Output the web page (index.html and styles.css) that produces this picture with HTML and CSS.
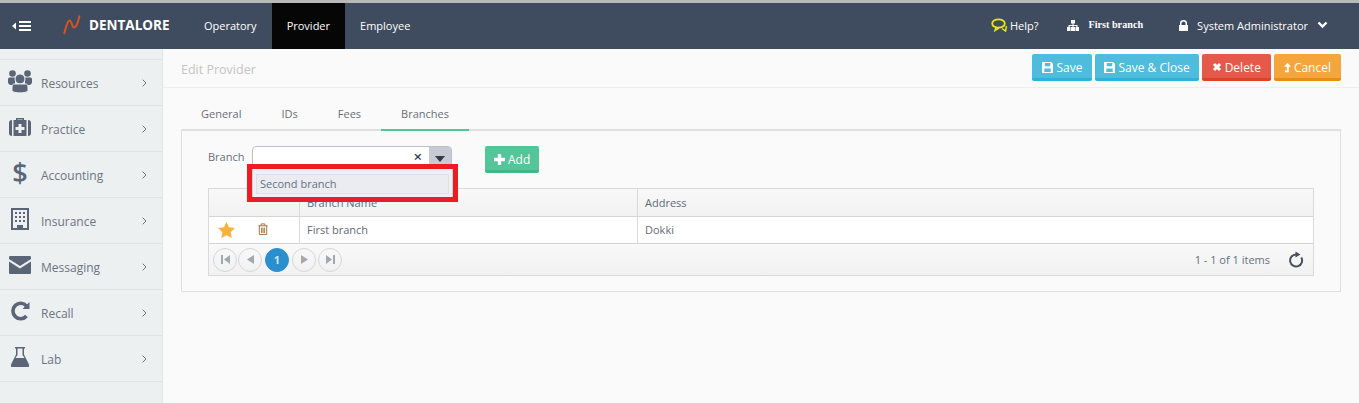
FILE: index.html
```html
<!DOCTYPE html>
<html lang="en">
<head>
<meta charset="utf-8">
<title>Edit Provider</title>
<link rel="stylesheet" href="styles.css">
</head>
<body>
<div class="app">
  <header class="topbar">
    <div class="toggle">
      <svg width="20" height="12" viewBox="0 0 20 12"><path class="w" d="M0 6l4-3.500v7zM7 1h12v2H7zM7 5h12v2H7zM7 9h12v2H7z"/></svg>
    </div>
    <div class="logo">
      <svg width="19" height="20" viewBox="0 0 19 20"><path d="M1 19C3 13 4 6 6.500 5.500c2-.4 2.500 7 4.500 7 3 0 4.500-7 5.500-12" fill="none" stroke="#d9541e" stroke-width="2"/></svg>
      <span>DENTALORE</span>
    </div>
    <nav class="mainnav">
      <a class="navitem">Operatory</a>
      <a class="navitem active">Provider</a>
      <a class="navitem">Employee</a>
    </nav>
    <div class="topright">
      <span class="help">
        <svg width="17" height="14" viewBox="0 0 17 14"><ellipse cx="7.500" cy="5.500" rx="6.300" ry="4.200" fill="none" stroke="#e6e61a" stroke-width="1.800"/><path d="M5 9.500l-1 3 4-2.500M11 10.500l3.500 2.500 1-5" fill="none" stroke="#e6e61a" stroke-width="1.500"/></svg>Help?
      </span>
      <span class="branch">
        <svg width="12" height="11" viewBox="0 0 12 11"><path class="w" d="M4 0h4v3.500H6.500V5h4v2h1.500v4H8.500V7h.8V6H6.500v1H8v4H4V7h1.500V6H2.700v1h.8v4H0V7h1.500V5h4V3.500H4z"/></svg>
        <b>First branch</b>
      </span>
      <span class="user">
        <svg width="9" height="11" viewBox="0 0 9 11"><path class="w" d="M0 5h1V3.200a3.500 3.200 0 0 1 7 0V5h1v6H0zM2.500 5h4V3.200a2 1.800 0 0 0-4 0z"/></svg>
        <span class="username">System Administrator</span>
        <svg width="11" height="8" viewBox="0 0 11 8"><path d="M1.500 1.500l4 4 4-4" fill="none" stroke="#fff" stroke-width="2.400"/></svg>
      </span>
    </div>
  </header>
  <div class="main">
    <aside class="sidebar">
      <div class="sideitem">
        <span class="iconbox"><svg width="24" height="23" viewBox="0 0 24 23"><g class="g"><circle cx="4.500" cy="3.500" r="3.300"/><circle cx="19.500" cy="3.500" r="3.300"/><path d="M0 9c0-1 1-1.500 2-1.500h5V15H2l-2-2zM24 9c0-1-1-1.500-2-1.500h-5V15h5l2-2z"/><circle cx="12" cy="9" r="5" stroke="#ecf0f1" stroke-width="1"/><path d="M6 14h12c2 0 2 3 2 6v1c-2 2.500-14 2.500-16 0v-1c0-3 0-6 2-6z" stroke="#ecf0f1" stroke-width="1"/></g></svg></span>
        <span class="sidelabel">Resources</span>
        <svg class="chev" width="5" height="8" viewBox="0 0 5 8"><path d="M.7.7L4 4 .7 7.300" fill="none" stroke="#6c7482" stroke-width="1"/></svg>
      </div>
      <div class="sideitem">
        <span class="iconbox"><svg width="22" height="20" viewBox="0 0 22 20"><path class="g" fill-rule="evenodd" d="M7 3V1h8v2h-1.500V2.500h-5V3zM0 6c0-2 1-3 3-3v16c-2 0-3-1-3-3zM22 6c0-2-1-3-3-3v16c2 0 3-1 3-3zM4.500 3h13v16h-13zM9.500 7v3h-3v3h3v3h3v-3h3v-3h-3V7z"/></svg></span>
        <span class="sidelabel">Practice</span>
        <svg class="chev" width="5" height="8" viewBox="0 0 5 8"><path d="M.7.7L4 4 .7 7.300" fill="none" stroke="#6c7482" stroke-width="1"/></svg>
      </div>
      <div class="sideitem">
        <span class="iconbox"><span class="dollar">$</span></span>
        <span class="sidelabel">Accounting</span>
        <svg class="chev" width="5" height="8" viewBox="0 0 5 8"><path d="M.7.7L4 4 .7 7.300" fill="none" stroke="#6c7482" stroke-width="1"/></svg>
      </div>
      <div class="sideitem">
        <span class="iconbox"><svg width="18" height="22" viewBox="0 0 18 22"><path class="g" fill-rule="evenodd" d="M0 0h18v22H0zM2 2v18h4v-3h6v3h4V2z"/><path class="g" d="M4 4h2v2H4zM8 4h2v2H8zM12 4h2v2h-2zM4 8h2v2H4zM8 8h2v2H8zM12 8h2v2h-2zM4 12h2v2H4zM8 12h2v2H8zM12 12h2v2h-2z"/></svg></span>
        <span class="sidelabel">Insurance</span>
        <svg class="chev" width="5" height="8" viewBox="0 0 5 8"><path d="M.7.7L4 4 .7 7.300" fill="none" stroke="#6c7482" stroke-width="1"/></svg>
      </div>
      <div class="sideitem">
        <span class="iconbox"><svg width="22" height="18" viewBox="0 0 22 18"><path class="g" d="M1 0h20c1 0 1 1 1 3L11 10 0 3c0-2 0-3 1-3zM0 5.500L11 12.500l11-7V17c0 .5-.5 1-1 1H1c-.5 0-1-.5-1-1z"/></svg></span>
        <span class="sidelabel">Messaging</span>
        <svg class="chev" width="5" height="8" viewBox="0 0 5 8"><path d="M.7.7L4 4 .7 7.300" fill="none" stroke="#6c7482" stroke-width="1"/></svg>
      </div>
      <div class="sideitem">
        <span class="iconbox"><svg width="20" height="20" viewBox="0 0 20 20"><path d="M16.500 15a7.700 7.700 0 1 1 0-10" fill="none" stroke="#5b6577" stroke-width="3.600"/><path class="g" d="M19.500 1v7h-7z"/></svg></span>
        <span class="sidelabel">Recall</span>
        <svg class="chev" width="5" height="8" viewBox="0 0 5 8"><path d="M.7.7L4 4 .7 7.300" fill="none" stroke="#6c7482" stroke-width="1"/></svg>
      </div>
      <div class="sideitem">
        <span class="iconbox"><svg width="18" height="20" viewBox="0 0 18 20"><path class="g" d="M4 0h10v1.500h-1v6l5 10c.5 1.500 0 2.500-1 2.500H1c-1 0-1.500-1-1-2.500l5-10v-6H4zM6.500 1.500v6.500L4.500 11h9l-2-3V1.500z"/></svg></span>
        <span class="sidelabel">Lab</span>
        <svg class="chev" width="5" height="8" viewBox="0 0 5 8"><path d="M.7.7L4 4 .7 7.300" fill="none" stroke="#6c7482" stroke-width="1"/></svg>
      </div>
    </aside>
    <main class="content">
      <div class="pagehead">
        <h1 class="title">Edit Provider</h1>
        <div class="actions">
          <button class="btn info save"><svg width="11" height="11" viewBox="0 0 12 12"><path class="w" fill-rule="evenodd" d="M0 0h10l2 2v10H0zM3 1v3.500h6V1zM2.500 7v4h7V7z"/></svg>Save</button>
          <button class="btn info saveclose"><svg width="11" height="11" viewBox="0 0 12 12"><path class="w" fill-rule="evenodd" d="M0 0h10l2 2v10H0zM3 1v3.500h6V1zM2.500 7v4h7V7z"/></svg>Save &amp; Close</button>
          <button class="btn danger"><svg width="10" height="10" viewBox="0 0 10 10"><path d="M2 2l6 6M8 2l-6 6" stroke="#fff" stroke-width="3"/></svg>Delete</button>
          <button class="btn warn"><svg width="7" height="11" viewBox="0 0 8 11"><path class="w" d="M4 0l4 4.500H5.500V11H1V9h2.200V4.500H0z"/></svg>Cancel</button>
        </div>
      </div>
      <div class="body">
        <div class="tabs">
          <a class="tab">General</a>
          <a class="tab">IDs</a>
          <a class="tab">Fees</a>
          <a class="tab current">Branches</a>
        </div>
        <section class="panel">
          <div class="formrow">
            <label class="fieldlabel">Branch</label>
            <div class="combo">
              <span class="comboinput"><span class="clear">×</span></span>
              <span class="comboarrow"><svg width="10" height="6" viewBox="0 0 10 6"><path d="M0 0h10L5 6z" fill="#2f3a4d"/></svg></span>
              <div class="dropdown"><div class="option">Second branch</div></div>
            </div>
            <button class="btn add"><svg width="11" height="11" viewBox="0 0 10 10"><path class="w" d="M3.500 0h3v3.500H10v3H6.500V10h-3V6.500H0v-3h3.500z"/></svg>Add</button>
          </div>
          <div class="grid">
            <div class="gridrow gridhead">
              <div class="cell c1"></div>
              <div class="cell c2">Branch Name</div>
              <div class="cell c3">Address</div>
            </div>
            <div class="gridrow griddata">
              <div class="cell c1">
                <svg width="17" height="16" viewBox="0 0 18 17"><path d="M9 0l2.700 5.700 6.300.8-4.600 4.300 1.200 6.200L9 14l-5.600 3 1.200-6.200L0 6.500l6.300-.8z" fill="#f7b13c"/></svg>
                <svg class="trash" width="12" height="12" viewBox="0 0 12 13"><path d="M1 3h10M4 3V1h4v2M2 3v9.500h8V3M4.500 5v6M6 5v6M7.500 5v6" fill="none" stroke="#a0693a" stroke-width="1"/></svg>
              </div>
              <div class="cell c2">First branch</div>
              <div class="cell c3">Dokki</div>
            </div>
            <div class="pager">
              <span class="pg"><svg width="9" height="9" viewBox="0 0 9 9"><path class="p" d="M0 0h2v9H0zM9 0v9L3 4.500z"/></svg></span>
              <span class="pg"><svg width="7" height="9" viewBox="0 0 7 9"><path class="p" d="M7 0v9L0 4.500z"/></svg></span>
              <span class="pg on">1</span>
              <span class="pg next"><svg width="7" height="9" viewBox="0 0 7 9"><path class="p" d="M0 0v9l7-4.500z"/></svg></span>
              <span class="pg last"><svg width="9" height="9" viewBox="0 0 9 9"><path class="p" d="M7 0h2v9H7zM0 0v9l6-4.500z"/></svg></span>
              <span class="pginfo">1 - 1 of 1 items</span>
              <svg class="refresh" width="16" height="17" viewBox="0 0 16 17"><path d="M8 3.500A6 6 0 1 0 13.300 6.500" fill="none" stroke="#47505f" stroke-width="2"/><path d="M7.500 .5L12.500 3.500 7.500 6.500z" fill="#47505f"/></svg>
            </div>
          </div>
        </section>
      </div>
    </main>
  </div>
</div>
</body>
</html>
```
FILE: styles.css
```css
* { box-sizing: border-box; }
html, body { margin: 0; height: 100%; overflow: hidden; }
body { font-family: "Open Sans", sans-serif; font-size: 11px; color: #5c6573; background: #fafafa; }
.w { fill: #fff; }
.g { fill: #5b6577; }
.p { fill: #a3a8b0; }
.app { display: flex; flex-direction: column; height: 403px; border-top: 3px solid #b9b9b9; }
.topbar { flex: 0 0 46px; display: flex; align-items: center; background: #3f4b5f; color: #fff; }
.toggle { width: 63px; padding: 0 0 0 12px; display: flex; align-items: center; }
.logo { width: 126px; display: flex; align-items: center; gap: 7px; padding: 0 0 2px; font-weight: 700; font-size: 13.500px; }
.mainnav { display: flex; height: 46px; }
.navitem { display: flex; align-items: center; padding: 0 15px 1px; font-size: 11px; color: #fff; }
.navitem.active { background: #060606; }
.topright { margin-left: auto; display: flex; align-items: center; font-size: 11px; padding: 0 31px 2px 0; }
.help { display: flex; align-items: center; gap: 2px; margin-right: 29px; }
.branch { display: flex; align-items: center; gap: 9px; margin-right: 36px; }
.branch b { font-family: "Liberation Serif", serif; font-size: 10.200px; font-weight: 700; margin-top: -2px; }
.user { display: flex; align-items: center; }
.username { margin: 0 9px; }
.main { flex: 1; display: flex; min-height: 0; }
.sidebar { flex: 0 0 163px; background: #ecf0f1; border-right: 1px solid #e2e5e7; padding-top: 10px; }
.sideitem { height: 46px; border-top: 1px solid #e0e3e5; display: flex; align-items: center; position: relative; padding: 0 0 3px 4px; }
.sideitem:last-child { border-bottom: 1px solid #e0e3e5; height: 47px; }
.iconbox { flex: 0 0 32px; display: flex; align-items: center; justify-content: center; }
.sidelabel { position: absolute; left: 41px; top: 15px; font-size: 12px; color: #6c7482; }
.chev { position: absolute; left: 142px; top: 19px; }
.dollar { font-size: 27px; font-weight: 600; line-height: 24px; color: #5b6577; }
.content { flex: 1; min-width: 0; }
.pagehead { height: 39px; border-bottom: 1px solid #eeeeee; display: flex; align-items: flex-start; justify-content: space-between; padding: 5px 18px 0 18px; }
.title { margin: 7px 0 0; font-size: 12.500px; font-weight: 400; color: #c4c4c4; }
.actions { display: flex; gap: 3px; }
.btn { font-family: "Open Sans", sans-serif; font-size: 12px; color: #fff; border: 0; border-radius: 2px; height: 27px; padding: 2px 10px 0; display: inline-flex; align-items: center; gap: 3px; }
.saveclose { padding: 2px 9px 0; }
.info { background: #4fbcdc; border-bottom: 3px solid #2fb0d6; }
.danger { background: #e5594b; border-bottom: 3px solid #e03f2c; }
.warn { background: #f4a63d; border-bottom: 3px solid #e58f12; }
.add { background: #53c598; border-bottom: 3px solid #3fb787; margin-left: 33px; padding: 2px 9px 0; }
.body { padding: 14px 18px 0; }
.tabs { display: flex; height: 29px; }
.tab { font-size: 11px; color: #6a6f78; padding: 4px 20px 0; height: 29px; }
.tab.current { border-bottom: 2px solid #53c598; position: relative; z-index: 1; }
.panel { border: 1px solid #dfdfdf; border-top-width: 2px; height: 163px; margin-top: -2px; padding: 15px 26px 0; border-radius: 1px; }
.formrow { display: flex; align-items: flex-start; height: 42px; }
.fieldlabel { width: 44px; margin-top: 3px; font-size: 11px; color: #6a6f78; }
.combo { position: relative; width: 200px; height: 21px; display: flex; border: 1px solid #bcc0c6; border-radius: 4px; background: #fff; }
.comboinput { flex: 1; position: relative; }
.clear { position: absolute; right: 7px; top: -1px; font-size: 15px; font-weight: 600; color: #2f3a4d; line-height: 20px; }
.comboarrow { width: 22px; background: #c6cbd3; display: flex; align-items: center; justify-content: center; padding-top: 5px; border-radius: 0 3px 3px 0; }
.dropdown { position: absolute; left: -6px; top: 17px; width: 211px; height: 38px; border: 5px solid #ed1c24; background: #eef0f3; padding: 5px 4px; z-index: 3; box-shadow: inset 1px 0 #c9cdd4, inset -1px 0 #c9cdd4; }
.option { height: 20px; background: #ebecf1; border: 1px solid #dfe0e6; padding-left: 3px; font-size: 11px; line-height: 18px; color: #66707f; }
.grid { border: 1px solid #d9d9d9; }
.gridrow { display: flex; }
.gridhead { height: 28px; background: linear-gradient(#f8f8f8, #f2f2f2); border-bottom: 1px solid #d4d4d4; }
.griddata { height: 27px; background: #fff; border-bottom: 1px solid #d4d4d4; }
.cell { padding: 5px 7px 0; font-size: 11px; color: #636b78; border-right: 1px solid #d9d9d9; }
.gridhead .cell { padding-top: 6px; }
.c1 { width: 91px; display: flex; align-items: flex-start; }
.griddata .c1 { padding: 5px 0 0 9px; }
.trash { margin: 1px 0 0 22px; }
.c2 { width: 338px; }
.c3 { flex: 1; border-right: 0; }
.pager { height: 31px; display: flex; align-items: center; gap: 1px; padding: 0 9px 0 4px; background: linear-gradient(#f9f9f9, #f1f1f1); }
.pg { width: 24px; height: 24px; border-radius: 50%; border: 1px solid #d6d6d6; display: flex; align-items: center; justify-content: center; font-size: 11px; font-weight: 700; }
.pg.on { background: #2a8fcf; border-color: #2a8fcf; color: #cfe6f5; margin-left: 2px; }
.pg.next { margin-left: 2px; }
.pg.last { margin-left: 1px; }
.pginfo { margin-left: auto; margin-right: 17px; font-size: 11px; color: #64707f; }
```
